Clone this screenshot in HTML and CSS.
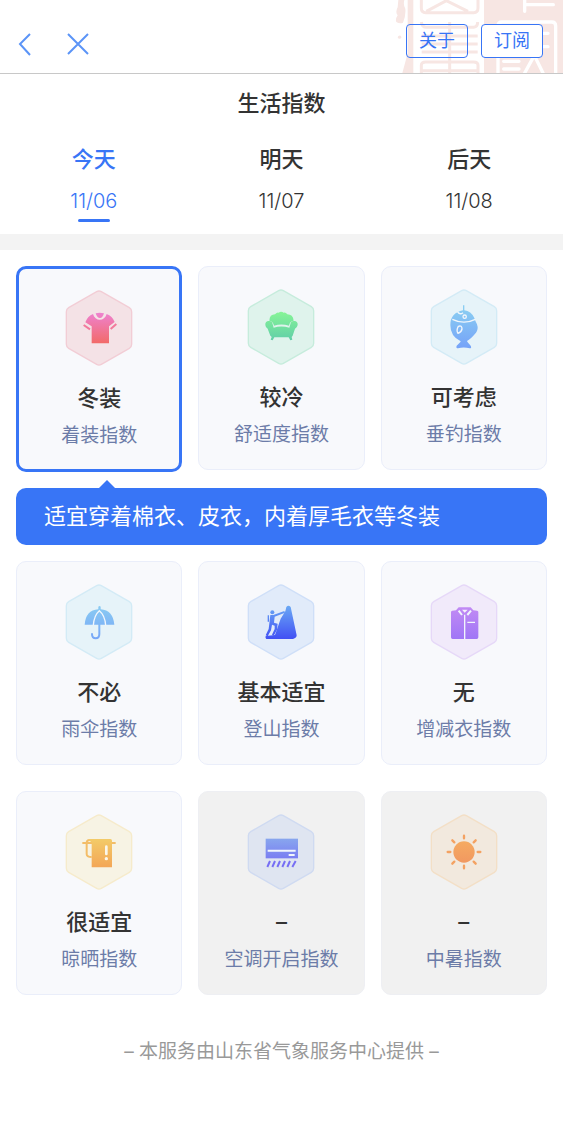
FILE: index.html
```html
<!DOCTYPE html>
<html lang="zh-CN">
  <head>
    <meta charset="UTF-8">
    <meta name="viewport" content="width=device-width, initial-scale=1">
    <title>生活指数</title>
    <link rel="stylesheet" href="styles.css">
  </head>
  <body>
    <!-- Shared hexagon and icon gradients -->
    <svg class="defs" width="0" height="0" aria-hidden="true">
      <defs>
        <path id="hex" d="M95 5Q102 1 109 5L193 53Q200 57 200 65V163Q200 171 193 175L109 223Q102 227 95 223L11 175Q4 171 4 163V65Q4 57 11 53Z"/>
        <linearGradient id="g-pink" gradientUnits="userSpaceOnUse" x1="0" y1="68" x2="0" y2="160"><stop offset="0" stop-color="#ee82d0"/><stop offset="1" stop-color="#f26a68"/></linearGradient>
        <linearGradient id="g-green" gradientUnits="userSpaceOnUse" x1="0" y1="68" x2="0" y2="152"><stop offset="0" stop-color="#86f596"/><stop offset="1" stop-color="#62cfa8"/></linearGradient>
        <linearGradient id="g-sky" gradientUnits="userSpaceOnUse" x1="0" y1="60" x2="0" y2="172"><stop offset="0" stop-color="#8acdf2"/><stop offset="1" stop-color="#76a4f8"/></linearGradient>
        <linearGradient id="g-blue" gradientUnits="userSpaceOnUse" x1="0" y1="66" x2="0" y2="165"><stop offset="0" stop-color="#6aa8f4"/><stop offset="1" stop-color="#4150f4"/></linearGradient>
        <linearGradient id="g-purple" gradientUnits="userSpaceOnUse" x1="0" y1="70" x2="0" y2="164"><stop offset="0" stop-color="#c18af4"/><stop offset="1" stop-color="#a076f6"/></linearGradient>
        <linearGradient id="g-gold" gradientUnits="userSpaceOnUse" x1="0" y1="75" x2="0" y2="160"><stop offset="0" stop-color="#f3cb68"/><stop offset="1" stop-color="#f3a657"/></linearGradient>
        <linearGradient id="g-indigo" gradientUnits="userSpaceOnUse" x1="0" y1="74" x2="0" y2="160"><stop offset="0" stop-color="#88a6ee"/><stop offset="1" stop-color="#746cf4"/></linearGradient>
        <linearGradient id="g-orange" gradientUnits="userSpaceOnUse" x1="0" y1="62" x2="0" y2="168"><stop offset="0" stop-color="#f6b062"/><stop offset="1" stop-color="#f09260"/></linearGradient>
      </defs>
    </svg>

    <header class="topbar">
      <svg class="seal" viewBox="0 0 540 219" aria-hidden="true">
        <path class="seal-fill" d="M46 0H64Q60 15 67 26Q69 48 60 68Q50 72 40 66Q36 58 44 46Q36 36 44 22ZM46 108Q56 104 55 114Q50 118 44 114ZM74 0H91V219H58Q66 190 74 160ZM303 0H540V219H303Z"/>
        <path class="seal-line" d="M115 0V24Q115 38 128 38H272Q285 38 285 24V0M130 34L190 2L255 34M115 66Q117 82 130 82H272Q284 80 284 66M200 66V219M116 108H284M116 132H284M116 156H284M115 219V196Q115 186 128 186H272Q285 186 285 196V219M115 212H285"/>
        <path class="seal-cut" d="M425 0V34M425 14H511M345 219V78Q345 66 357 66H506Q518 66 518 78V219M362 184H408M362 207H408M425 219L454 166L480 219M365 100H495M365 140H495"/>
      </svg>
      <div class="nav">
        <button class="nav-btn" aria-label="返回"><svg width="24" height="24" viewBox="0 0 24 24"><path d="M17 2L7 12L17 23"/></svg></button>
        <button class="nav-btn" aria-label="关闭"><svg width="24" height="24" viewBox="0 0 24 24"><path d="M2 2L22 22M22 2L2 22"/></svg></button>
      </div>
      <div class="actions">
        <button class="action">关于</button>
        <button class="action solid">订阅</button>
      </div>
    </header>

    <h1>生活指数</h1>

    <div class="tabs">
      <button class="tab active"><span class="day">今天</span><span class="date">11/06</span></button>
      <button class="tab"><span class="day">明天</span><span class="date">11/07</span></button>
      <button class="tab"><span class="day">后天</span><span class="date">11/08</span></button>
    </div>

    <main>
      <div class="row">
        <button class="card selected">
          <svg class="icon pink" viewBox="0 0 204 228">
            <use href="#hex"/>
            <g fill="url(#g-pink)">
              <path d="M84 72Q68 78 61 97L80 109V160H132V109L149 96Q142 78 125 72C119 95 90 95 84 72Z"/>
              <path d="M92 70Q104 66 117 70Q113 84 105 84Q96 84 92 70Z"/>
            </g>
            <path d="M56 105L75 118M154 102L137 117" fill="none" stroke="#f27a9c" stroke-width="6"/>
          </svg>
          <span class="value">冬装</span>
          <span class="label">着装指数</span>
        </button>
        <button class="card">
          <svg class="icon green" viewBox="0 0 204 228">
            <use href="#hex"/>
            <g fill="url(#g-green)">
              <path d="M67 95Q68 76 84 76Q90 69 95 71Q102 66 110 71Q116 69 121 76Q138 76 140 95Q128 97 126 110Q103 103 81 110Q78 96 67 95Z"/>
              <path d="M55 108a11 11 0 0 1 22 -2L80 116Q103 109 127 116L130 106a11 11 0 0 1 22 2Q150 117 144 119L137 140L134 144L136 152L130 154L125 145H82L77 154L71 152L74 144L70 140L62 119Q56 117 55 108Z"/>
            </g>
          </svg>
          <span class="value">较冷</span>
          <span class="label">舒适度指数</span>
        </button>
        <button class="card">
          <svg class="icon sky" viewBox="0 0 204 228">
            <use href="#hex"/>
            <path fill="url(#g-sky)" d="M99 49H103V64Q123 66 133 87Q136 97 141 106Q146 120 138 131Q122 150 111 156Q112 160 122 170Q126 178 119 178Q101 173 84 178Q77 178 80 170Q92 160 92 157Q61 142 61 108Q61 72 99 64Z"/>
            <g class="light">
              <path d="M67 91Q102 108 136 91M83 69Q90 78 99 71"/>
              <circle cx="104" cy="83" r="5"/>
              <path d="M85 112Q96 108 96 120Q94 130 84 133Q78 124 85 112Z"/>
            </g>
          </svg>
          <span class="value">可考虑</span>
          <span class="label">垂钓指数</span>
        </button>
      </div>

      <p class="tip">适宜穿着棉衣、皮衣，内着厚毛衣等冬装</p>

      <div class="row">
        <button class="card">
          <svg class="icon sky" viewBox="0 0 204 228">
            <use href="#hex"/>
            <path fill="url(#g-sky)" d="M59 122Q62 79 100 76V68Q104 64 107 68V76Q144 79 148 122Z"/>
            <path class="light" d="M85 124Q87 94 103 80Q120 94 122 124"/>
            <path d="M103 120V150Q103 163 92 163Q81 163 81 150" fill="none" stroke="url(#g-sky)" stroke-width="6" stroke-linecap="round"/>
          </svg>
          <span class="value">不必</span>
          <span class="label">雨伞指数</span>
        </button>
        <button class="card">
          <svg class="icon blue" viewBox="0 0 204 228">
            <use href="#hex"/>
            <g fill="url(#g-blue)">
              <path d="M118 69Q124 62 131 69L149 154Q149 162 138 165H58Q54 162 56 156L84 153L101 104L115 82Z"/>
              <circle cx="76" cy="85" r="6"/>
              <path d="M62 94H66V113H62ZM70 93H79L112 81L114 86L83 98L81 116L92 119L90 137L80 155L75 152L83 135V125L75 122L72 139L62 157L56 154L65 135Z"/>
            </g>
          </svg>
          <span class="value">基本适宜</span>
          <span class="label">登山指数</span>
        </button>
        <button class="card">
          <svg class="icon purple" viewBox="0 0 204 228">
            <use href="#hex"/>
            <path fill="url(#g-purple)" d="M63 84Q63 79 78 79L86 70H122L130 79Q145 79 145 84V160Q145 165 140 165H68Q63 165 63 160Z"/>
            <path class="light" d="M104 92V165M112 115H135"/>
            <path class="light thick" d="M86 80L96 93M123 80L112 93"/>
            <path fill="#f5f0fb" d="M96 77H113L104 86Z"/>
          </svg>
          <span class="value">无</span>
          <span class="label">增减衣指数</span>
        </button>
      </div>

      <div class="row">
        <button class="card">
          <svg class="icon gold" viewBox="0 0 204 228">
            <use href="#hex"/>
            <path d="M52 87H152M84 78H74Q65 78 65 87V120Q65 129 80 129" fill="none" stroke="#f3bd68" stroke-width="6"/>
            <path fill="url(#g-gold)" d="M72 75H136Q141 75 141 80V160H80V87Q80 82 72 80Z"/>
            <rect x="120" y="94" width="8" height="30" rx="4" fill="#fbf7ea"/>
            <circle cx="124" cy="134" r="5" fill="#fbf7ea"/>
          </svg>
          <span class="value">很适宜</span>
          <span class="label">晾晒指数</span>
        </button>
        <button class="card off">
          <svg class="icon indigo" viewBox="0 0 204 228">
            <use href="#hex"/>
            <rect x="56" y="74" width="97" height="59" fill="url(#g-indigo)"/>
            <path class="light thick" d="M62 110H146M125 123H143"/>
            <path d="M61 159L69 141M76 159L84 141M91 159L99 141M106 159L114 141M121 159L129 141M136 159L146 141" fill="none" stroke="#776ff4" stroke-width="6"/>
          </svg>
          <span class="value">–</span>
          <span class="label">空调开启指数</span>
        </button>
        <button class="card off">
          <svg class="icon orange" viewBox="0 0 204 228">
            <use href="#hex"/>
            <circle cx="102" cy="114" r="32" fill="url(#g-orange)"/>
            <path d="M102 65V73M102 155V163M53 114H61M143 114H151M67 79L73 85M131 143L137 149M67 149L73 143M131 85L137 79" fill="none" stroke="#f4a262" stroke-width="7" stroke-linecap="round"/>
          </svg>
          <span class="value">–</span>
          <span class="label">中暑指数</span>
        </button>
      </div>
    </main>

    <footer>– 本服务由山东省气象服务中心提供 –</footer>
  </body>
</html>
```

FILE: styles.css
```css
* { box-sizing: border-box; }
body {
  margin: 0;
  background: #fff;
  color: #333;
  font-family: Inter, "Noto Sans CJK SC", sans-serif;
}
button {
  margin: 0;
  padding: 0;
  border: 0;
  background: none;
  color: inherit;
  font: inherit;
  cursor: pointer;
}
.defs { position: absolute; }

/* Top bar */
.topbar {
  position: relative;
  display: flex;
  justify-content: space-between;
  height: 74px;
  padding: 24px 20px 0 13px;
  border-bottom: 1px solid #c8c8c8;
  overflow: hidden;
}
.seal { position: absolute; top: 0; right: 0; width: 180px; height: 73px; }
.seal-fill { fill: #f7e6e3; }
.seal-line { fill: none; stroke: #f7e6e3; stroke-width: 9; }
.seal-cut { fill: none; stroke: #fff; stroke-width: 10; stroke-linecap: round; }
.nav { display: flex; gap: 29px; padding-top: 8px; }
.nav-btn { height: 24px; }
.nav-btn svg { display: block; fill: none; stroke: #5b94f7; stroke-width: 2; }
.actions { position: relative; display: flex; gap: 13px; }
.action {
  width: 62px;
  height: 34px;
  border: 1px solid #3875f6;
  border-radius: 4px;
  color: #3875f6;
  font-size: 18px;
  line-height: 32px;
}
.action.solid { background: #fff; }

h1 {
  margin: 0;
  padding-top: 13px;
  font-size: 22px;
  font-weight: 500;
  line-height: 32px;
  text-align: center;
}

/* Day tabs */
.tabs { display: flex; padding-top: 24px; border-bottom: 16px solid #f3f3f3; }
.tab { flex: 1; display: flex; flex-direction: column; align-items: center; }
.tab::after {
  content: "";
  width: 32px;
  height: 3px;
  margin: 4px 0 12px;
  border-radius: 2px;
}
.tab.active { color: #3875f6; }
.tab.active::after { background: #3875f6; }
.day { font-size: 22px; font-weight: 500; line-height: 32px; }
.date { margin-top: 12px; font-size: 20px; font-weight: 300; line-height: 28px; }

/* Index cards */
main { padding: 16px 16px 0; }
.row {
  display: grid;
  grid-template-columns: repeat(3, 1fr);
  align-items: start;
  gap: 16px;
  margin-bottom: 26px;
}
.card {
  display: flex;
  flex-direction: column;
  align-items: center;
  padding: 22px 0 20px;
  border: 1px solid #eaeefa;
  border-radius: 10px;
  background: #f8f9fc;
}
.card.selected { padding: 21px 0 19px; border: 3px solid #3875f6; }
.card.off { background: #f1f1f1; border-color: #eeeff3; }
.icon { display: block; width: 68px; height: 76px; margin-bottom: 17px; }
.icon use { stroke-width: 4; }
.value { font-size: 22px; font-weight: 500; line-height: 30px; }
.label { margin-top: 9px; color: #6c7ca8; font-size: 19px; line-height: 28px; }
.light { fill: none; stroke: #f1f6fc; stroke-width: 4; }
.light.thick { stroke-width: 6; }

.pink use { fill: #f4e2e6; stroke: #f2cdd5; }
.green use { fill: #dff3ec; stroke: #c6ecdc; }
.sky use { fill: #e6f3f9; stroke: #d3ebf6; }
.blue use { fill: #e1ebfa; stroke: #cfdff8; }
.purple use { fill: #f1eafa; stroke: #e6d8f8; }
.gold use { fill: #f7f3e4; stroke: #f6ebcb; }
.indigo use { fill: #dfe5f1; stroke: #cfdaf1; }
.orange use { fill: #f2e9de; stroke: #f3dfc6; }

.tip {
  position: relative;
  margin: -10px 0 16px;
  padding: 12px 28px 13px;
  border-radius: 10px;
  background: #3875f6;
  color: #fff;
  font-size: 22px;
  line-height: 32px;
}
.tip::before {
  content: "";
  position: absolute;
  top: -8px;
  left: 83px;
  border: 8px solid transparent;
  border-top: 0;
  border-bottom-color: #3875f6;
}

footer {
  padding: 17px 0 76px;
  color: #999;
  font-size: 19px;
  line-height: 28px;
  text-align: center;
}
```
